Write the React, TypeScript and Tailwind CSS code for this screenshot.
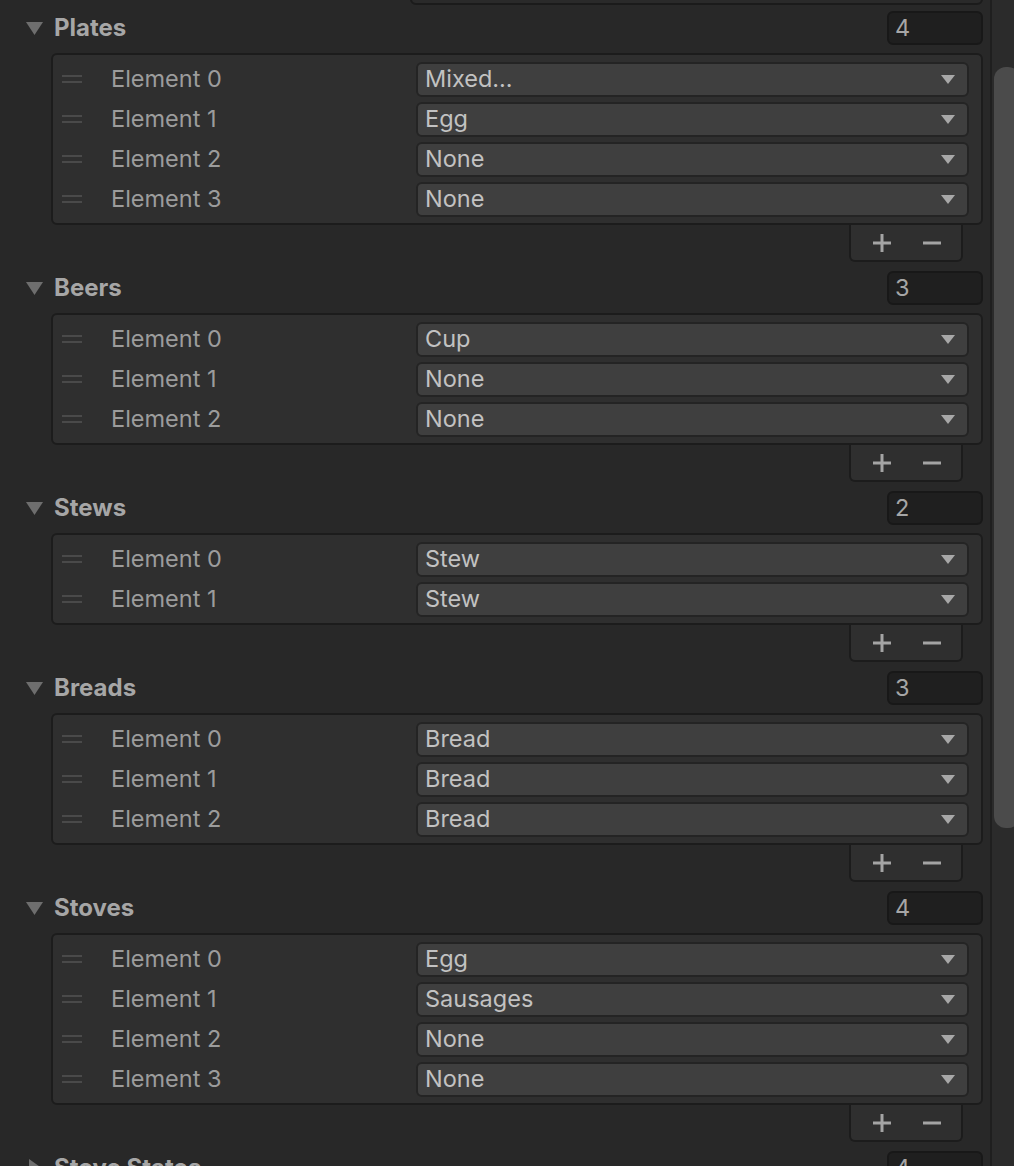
import React from "react";

interface ListSection {
  title: string;
  items: string[];
}

const sections: ListSection[] = [
  { title: "Plates", items: ["Mixed...", "Egg", "None", "None"] },
  { title: "Beers", items: ["Cup", "None", "None"] },
  { title: "Stews", items: ["Stew", "Stew"] },
  { title: "Breads", items: ["Bread", "Bread", "Bread"] },
  { title: "Stoves", items: ["Egg", "Sausages", "None", "None"] },
];

const Foldout = ({ open }: { open: boolean }) => (
  <svg width="18" height="18" viewBox="0 0 18 18" className="shrink-0">
    {open ? <path d="M0 3 H17 L8.5 16 Z" fill="#6e6e6e" /> : <path d="M3 0 V17 L15 8.5 Z" fill="#6e6e6e" />}
  </svg>
);

const HeaderRow = ({ title, count, open }: { title: string; count: number; open: boolean }) => (
  <div className="flex h-[34px] items-center pl-[26px]">
    <Foldout open={open} />
    <span className="ml-[10px] text-[24px] font-bold text-[#a6a6a6]">{title}</span>
    <div className="ml-auto flex h-[34px] w-[96px] items-center rounded-[6px] border-2 border-[#181818] bg-[#1f1f1f] pl-[6px] text-[23.5px] text-[#a6a6a6]">
      {count}
    </div>
  </div>
);

const ElementRow = ({ index, value }: { index: number; value: string }) => (
  <div className="flex h-[40px] items-center">
    {/* drag handle */}
    <div className="ml-[9px] flex w-[20px] flex-col gap-[4px]">
      <div className="h-[2px] bg-[#4a4a4a]" />
      <div className="h-[2px] bg-[#4a4a4a]" />
    </div>
    <span className="ml-[29px] w-[305px] text-[23.5px] text-[#9c9c9c]">Element {index}</span>
    <div className="mr-[12px] flex h-[35px] flex-1 items-center rounded-[6px] border-2 border-[#242424] bg-[#3f3f3f] pl-[7px] pr-[12px]">
      <span className="flex-1 text-[23.5px] text-[#c2c2c2]">{value}</span>
      <svg width="14" height="9" viewBox="0 0 14 9">
        <path d="M0 0 H14 L7 9 Z" fill="#a8a8a8" />
      </svg>
    </div>
  </div>
);

const ListBlock = ({ section }: { section: ListSection }) => (
  <div className="mb-[9px]">
    <HeaderRow title={section.title} count={section.items.length} open />
    <div className="ml-[51px] mt-[8px] rounded-[6px] border-2 border-[#1c1c1c] bg-[#2f2f2f] py-[4px]">
      {section.items.map((item, i) => (
        <ElementRow key={i} index={i} value={item} />
      ))}
    </div>
    <div className="ml-auto mr-[20px] flex h-[37px] w-[114px] items-center rounded-b-[6px] border-2 border-t-0 border-[#1c1c1c] bg-[#2f2f2f]">
      <svg width="20" height="20" viewBox="0 0 20 20" className="ml-[21px]">
        <path d="M10 1 V19 M1 10 H19" stroke="#a4a4a4" strokeWidth="3" />
      </svg>
      <svg width="18" height="20" viewBox="0 0 18 20" className="ml-[31px]">
        <path d="M0 10 H18" stroke="#a4a4a4" strokeWidth="3" />
      </svg>
    </div>
  </div>
);

export default function App() {
  return (
    <div
      className="flex h-[1166px] w-[1014px] overflow-hidden bg-[#282828]"
      style={{ fontFamily: "Inter, 'Noto Sans', sans-serif" }}
    >
      <div className="flex-1 pr-[7px]">
        {/* bottom of the field above */}
        <div className="-mt-[30px] ml-[410px] h-[35px] rounded-[6px] border-2 border-[#1b1b1b] bg-[#2a2a2a]" />
        <div className="mt-[6px]">
          {sections.map((s) => (
            <ListBlock key={s.title} section={s} />
          ))}
          <HeaderRow title="Stove States" count={4} open={false} />
        </div>
      </div>
      {/* scrollbar */}
      <div className="w-[2px] bg-[#1f1f1f]" />
      <div className="w-[22px] overflow-hidden bg-[#2b2b2b] pt-[67px]">
        <div className="ml-[2px] h-[761px] w-[26px] rounded-[12px] bg-[#4b4b4b]" />
      </div>
    </div>
  );
}
